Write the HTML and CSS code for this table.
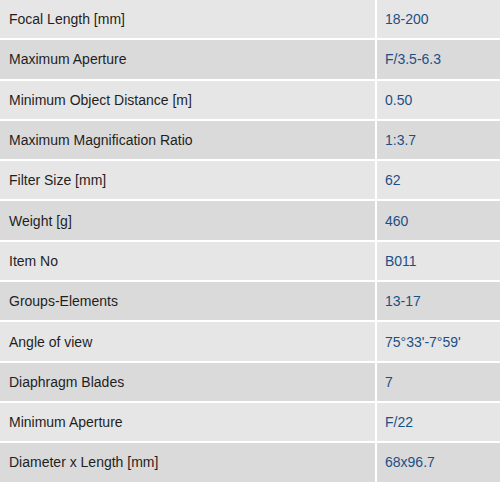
FILE: index.html
```html
<!DOCTYPE html>
<html>
<head>
<meta charset="utf-8">
<link rel="stylesheet" href="styles.css">
</head>
<body>
<div class="specs">
  <div class="row"><div class="label">Focal Length [mm]</div><div class="value">18-200</div></div>
  <div class="row"><div class="label">Maximum Aperture</div><div class="value">F/3.5-6.3</div></div>
  <div class="row"><div class="label">Minimum Object Distance [m]</div><div class="value">0.50</div></div>
  <div class="row"><div class="label">Maximum Magnification Ratio</div><div class="value">1:3.7</div></div>
  <div class="row"><div class="label">Filter Size [mm]</div><div class="value">62</div></div>
  <div class="row"><div class="label">Weight [g]</div><div class="value">460</div></div>
  <div class="row"><div class="label">Item No</div><div class="value">B011</div></div>
  <div class="row"><div class="label">Groups-Elements</div><div class="value">13-17</div></div>
  <div class="row"><div class="label">Angle of view</div><div class="value">75°33'-7°59'</div></div>
  <div class="row"><div class="label">Diaphragm Blades</div><div class="value">7</div></div>
  <div class="row"><div class="label">Minimum Aperture</div><div class="value">F/22</div></div>
  <div class="row"><div class="label">Diameter x Length [mm]</div><div class="value">68x96.7</div></div>
</div>
</body>
</html>
```
FILE: styles.css
```css
html, body {
  margin: 0;
  padding: 0;
  background: #ffffff;
}
body {
  font-family: "Liberation Sans", Arial, sans-serif;
  font-size: 14px;
  width: 500px;
}
.specs {
  display: flex;
  flex-direction: column;
  gap: 2px;
}
.row {
  display: grid;
  grid-template-columns: 375px 1fr;
  column-gap: 2px;
  height: 38.3px;
}
.row > div {
  display: flex;
  align-items: center;
  padding-bottom: 0;
}
.row:nth-child(odd) > div {
  background: #e6e6e6;
}
.row:nth-child(even) > div {
  background: #dadada;
}
.label {
  padding-left: 9px;
  color: #1f1f1f;
}
.value {
  padding-left: 8px;
  color: #1d4f85;
}
```
